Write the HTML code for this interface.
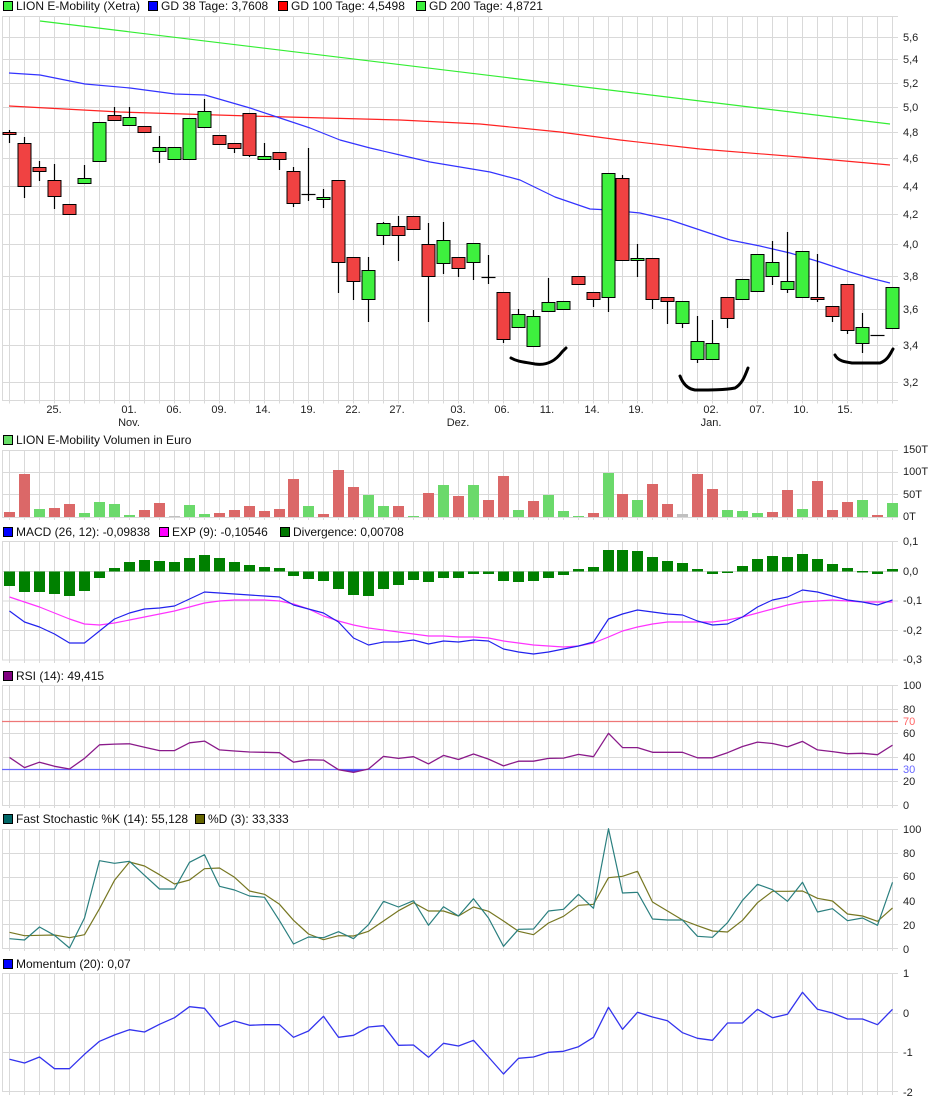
<!DOCTYPE html>
<html><head><meta charset="utf-8">
<style>
html,body{margin:0;padding:0;background:#fff;width:940px;height:1102px;overflow:hidden}
svg{display:block;font-family:"Liberation Sans",sans-serif}
</style></head>
<body>
<svg id="c" width="940" height="1102" xmlns="http://www.w3.org/2000/svg"></svg>
<script>
var S=[];
function X(k){return Math.round(9.3+14.956*k)+0.5;}
function line(x1,y1,x2,y2,c,w){S.push('<line x1="'+x1+'" y1="'+y1+'" x2="'+x2+'" y2="'+y2+'" stroke="'+c+'" stroke-width="'+(w||1)+'"/>');}
function rect(x,y,w,h,f,s){S.push('<rect x="'+x+'" y="'+y+'" width="'+w+'" height="'+h+'" fill="'+f+'"'+(s?' stroke="'+s+'" stroke-width="1"':'')+'/>');}
function text(x,y,t,sz,c,anchor){S.push('<text x="'+x+'" y="'+y+'" font-size="'+(sz||11)+'" fill="'+(c||'#222')+'"'+(anchor?' text-anchor="'+anchor+'"':'')+'>'+t+'</text>');}
function poly(pts,c,w){S.push('<polyline fill="none" stroke="'+c+'" stroke-width="'+(w||1.2)+'" stroke-linejoin="round" points="'+pts.map(function(p){return p[0].toFixed(1)+','+p[1].toFixed(1)}).join(' ')+'"/>');}
var G='#d9d9d9';
function panel(top,bot,hl){
  for(var k=0;k<60;k++)line(X(k),top,X(k),bot+3,G);
  line(2.5,top,2.5,bot,G);
  hl.forEach(function(y){line(2,y,898,y,G);});
}
function legend(x,y,col,t){rect(x+0.5,y-4.5,9,9,col,'#000');text(x+13,y+4,t,12,'#111');}

// PRICE
var pY=function(p){return 1099.1-616.5*Math.log(p);};
var ph=[16.5,400.5];for(var v=3.2;v<5.65;v+=0.2){ph.push(Math.round(pY(v))+0.5);}
panel(16,400.5,ph);
for(var v=3.2;v<5.65;v+=0.2){text(903,Math.round(pY(v))+4,v.toFixed(1).replace('.',','),11);}
legend(3,6,'#3cf03c','LION E-Mobility (Xetra)');
legend(148,6,'#0000ff','GD 38 Tage: 3,7608');
legend(278,6,'#ff0000','GD 100 Tage: 4,5498');
legend(416,6,'#3cf03c','GD 200 Tage: 4,8721');
// MAs
poly([[40,21],[890,124]],'#33ee33',1.2);
poly([[9,106],[120,112],[250,116],[400,120],[480,124],[560,132],[620,140],[700,149],[800,157],[890,165]],'#ff2222',1.2);
poly([[9,73],[40,75],[85,84],[130,88],[175,94],[205,95],[250,108],[280,118],[310,128],[340,140],[370,148],[400,155],[430,162],[460,167],[490,172],[520,180],[555,197],[590,209],[610,210],[640,213],[670,220],[700,230],[730,240],[760,246],[790,253],[820,262],[850,272],[870,278],[890,283]],'#3333ff',1.2);
var C=[[132,134,130,143,'r'],[143,186,137,198,'r'],[167,171,161,181,'r'],[180,196,164,209,'r'],[204,214,204,214,'r'],[178,183,165,183,'g'],[122,161,122,161,'g'],[115,120,107,120,'r'],[117,125,107,125,'g'],[126,132,126,132,'r'],
[147,151,136,163,'g'],[147,159,147,159,'g'],[118,159,118,159,'g'],[111,127,99,127,'g'],[135,144,135,144,'r'],[143,148,143,153,'r'],[113,155,113,157,'r'],[156,159,143,159,'g'],[152,159,152,170,'r'],[171,203,167,207,'r'],
[194,194,148,201,'d'],[197,199,189,208,'g'],[180,262,180,293,'r'],[257,281,257,300,'r'],[270,299,257,322,'g'],[223,235,222,245,'g'],[226,235,216,261,'r'],[216,229,216,229,'r'],[244,276,223,322,'r'],[240,263,222,274,'g'],
[257,268,257,277,'r'],[243,262,243,280,'g'],[277,277,255,284,'d'],[292,339,292,343,'r'],[314,327,309,327,'g'],[316,346,310,346,'g'],[302,311,278,311,'g'],[301,309,301,309,'g'],[276,284,276,284,'r'],[292,299,292,307,'r'],
[173,297,173,312,'g'],[178,260,175,260,'r'],[258,260,244,277,'g'],[258,299,258,309,'r'],[297,301,297,324,'r'],[301,323,301,328,'g'],[341,359,316,363,'g'],[343,359,320,359,'g'],[297,318,297,328,'r'],[279,299,279,299,'g'],
[254,291,254,291,'g'],[262,276,241,285,'g'],[281,289,232,293,'g'],[251,297,251,297,'g'],[297,299,254,302,'r'],[306,316,306,322,'r'],[284,330,284,334,'r'],[327,343,313,353,'g'],[335,335,335,335,'d'],[287,328,287,328,'g']];
C.forEach(function(c,k){var x=X(k);
  line(x,c[2],x,c[3],'#000',1.2);
  if(c[4]=='d'){line(x-7,c[0]+0.5,x+7,c[0]+0.5,'#000',1.2);}
  else rect(x-6.5,c[0]+0.5,13,Math.max(c[1]-c[0],2),c[4]=='r'?'#f04242':'#3ef03e','#000');
});
// hand drawn curves
S.push('<path d="M511,358 C518,362 525,362 535,364 C548,366 556,360 562,352 L566,348" fill="none" stroke="#000" stroke-width="3" stroke-linecap="round"/>');
S.push('<path d="M680,376 C683,384 688,389 695,390 C710,390 725,390 735,388 C742,384 745,376 748,368" fill="none" stroke="#000" stroke-width="3" stroke-linecap="round"/>');
S.push('<path d="M835,355 C838,361 845,362 852,363 L880,363 C888,360 890,354 893,349" fill="none" stroke="#000" stroke-width="3" stroke-linecap="round"/>');
// dates
[['25.',54],['01.',129],['06.',174],['09.',219],['14.',263],['19.',308],['22.',353],['27.',397],['03.',458],['06.',502],['11.',547],['14.',592],['19.',636],['02.',711],['07.',757],['10.',801],['15.',845]].forEach(function(d){text(d[1],413,d[0],11,'#222','middle');});
[['Nov.',129],['Dez.',458],['Jan.',711]].forEach(function(d){text(d[1],426,d[0],11,'#222','middle');});

// VOLUME
panel(450,517,[450.5,472.5,494.5,517.5]);
legend(3,440,'#66dd66','LION E-Mobility Volumen in Euro');
[['150T',453],['100T',475],['50T',498],['0T',520]].forEach(function(l){text(903,l[1],l[0],11);});
var V=[[512,'r'],[474,'r'],[509,'g'],[508,'r'],[504,'r'],[513,'g'],[502,'g'],[504,'g'],[515,'g'],[510,'r'],[503,'r'],[516,'x'],[505,'g'],[514,'g'],[513,'r'],[510,'r'],[506,'r'],[511,'r'],[509,'r'],[479,'r'],[506,'g'],[514,'r'],[470,'r'],[487,'r'],[495,'g'],[506,'g'],[506,'r'],[516,'g'],[493,'r'],[485,'g'],
[496,'r'],[485,'g'],[500,'r'],[476,'r'],[510,'g'],[501,'r'],[495,'g'],[511,'g'],[516,'g'],[513,'r'],[473,'g'],[494,'r'],[500,'g'],[484,'r'],[504,'r'],[514,'x'],[474,'r'],[489,'r'],[510,'g'],[511,'g'],[513,'g'],[512,'r'],[490,'r'],[509,'g'],[481,'r'],[510,'r'],[502,'r'],[500,'g'],[515,'r'],[503,'g']];
V.forEach(function(v,k){rect(X(k)-5.5,v[0],11,517-v[0],v[1]=='r'?'#db6868':v[1]=='g'?'#6bd96b':'#c0c0c0');});

// MACD
panel(541,660,[541.5,571.5,601,630.5,660]);
legend(3,532,'#0000ff','MACD (26, 12): -0,09838');
legend(159,532,'#ff00ff','EXP (9): -0,10546');
legend(280,532,'#007700','Divergence: 0,00708');
[['0,1',545],['0,0',575],['-0,1',604],['-0,2',634],['-0,3',663]].forEach(function(l){text(903,l[1],l[0],11);});
var D=[586,592,592,594,596,591,578,568,562,560,561,562,558,555,558,562,565,567,568,576,579,581,589,595,596,589,585,580,582,578,578,574,574,581,582,581,578,575,569,567,550,550,551,557,561,563,569,574,573,566,559,556,557,554,559,564,568,571,574,569];
D.forEach(function(d,k){var z=571.5;var t=Math.min(d,z),h=Math.abs(d-z);if(h<1.5)h=1.5;rect(X(k)-5.5,t,11,h,'#008000');});
var M=[611,622,627,634,643,643,631,619,613,609,608,606,599,592,593,594,595,596,597,605,609,613,622,638,645,642,642,640,644,641,642,640,641,649,652,654,652,649,646,642,619,614,610,612,614,615,621,625,624,617,607,600,597,590,592,596,600,602,605,600];
var E=[597,602,607,613,619,624,625,623,620,617,614,611,607,603,601,600,600,600,601,604,609,616,621,625,628,630,632,634,636,636,637,637,638,641,643,645,646,647,646,643,637,631,627,624,622,622,622,622,620,617,613,609,605,602,601,600,601,602,602,602];
poly(E.map(function(y,k){return [X(k),y]}),'#ff33ff',1.2);
poly(M.map(function(y,k){return [X(k),y]}),'#2222ee',1.2);

// RSI
var rY=function(v){return 805-1.2*v;};
panel(685,805,[685.5,709.5,733.5,757.5,781.5,805.5]);
legend(3,676,'#800080','RSI (14): 49,415');
line(2,721.5,898,721.5,'#ee7777',1.2);
line(2,769.5,898,769.5,'#6666ff',1.2);
[['100',100],['80',80],['60',60],['40',40],['20',20],['0',0]].forEach(function(l){text(903,rY(l[1])+4,l[0],11);});
text(903,rY(70)+4,'70',11,'#ff6666');text(903,rY(30)+4,'30',11,'#6666ff');
var R=[262,292,276,288,296,265,225,223,222,232,242,242,219,214,240,243,246,247,248,276,269,270,298,306,296,259,265,260,281,256,268,252,267,287,273,273,265,264,253,260,191,233,233,247,247,247,263,263,248,230,217,221,231,215,240,245,251,250,254,226];
var RP=R.map(function(z,k){return [X(k),rY(30+(296-z)*40/141)]});
S.push('<polygon points="'+X(22)+',769.5 '+X(23)+','+RP[23][1]+' '+X(24)+',769.5" fill="#4444ee"/>');
poly(RP,'#8a1a8a',1.3);

// STOCH
panel(829,948,[829.5,853.5,877.5,900.5,924.5,948.5]);
legend(3,819,'#006666','Fast Stochastic %K (14): 55,128');
legend(195,819,'#666600','%D (3): 33,333');
[['100',833],['80',857],['60',880],['40',905],['20',929],['0',953]].forEach(function(l){text(903,l[1],l[0],11);});
var K=[380,384,345,370,408,318,146,154,148,190,231,231,151,128,223,234,252,256,326,396,375,377,359,380,338,268,285,266,340,284,312,260,318,403,352,351,297,292,247,289,50,243,241,321,324,324,373,376,332,265,217,233,268,211,300,290,326,318,340,211];
var DD=[361,371,370,369,377,368,290,205,150,162,188,216,204,170,168,196,237,247,277,325,366,383,371,372,358,327,296,272,297,297,312,285,298,327,358,368,333,313,280,277,197,193,178,270,297,324,341,357,360,325,272,238,238,237,259,267,306,312,328,288];
poly(DD.map(function(z,k){return [X(k),812+z/3]}),'#777722',1.2);
poly(K.map(function(z,k){return [X(k),812+z/3]}),'#2a7f7f',1.2);

// MOMENTUM
panel(973,1092,[973.5,1013.5,1052.5,1091.5]);
legend(3,964,'#0000ff','Momentum (20): 0,07');
[['1',977],['0',1017],['-1',1056],['-2',1096]].forEach(function(l){text(903,l[1],l[0],11);});
var MO=[313,324,306,341,341,298,259,240,224,231,208,188,155,160,215,198,211,209,209,247,228,184,247,241,216,212,271,270,307,265,273,256,306,357,310,306,292,289,275,247,157,223,172,186,197,233,250,256,204,204,163,188,178,112,163,174,192,192,209,163];
poly(MO.map(function(z,k){return [X(k),955+z/3]}),'#3333ee',1.3);

document.getElementById('c').innerHTML=S.join('');
</script>
</body></html>
